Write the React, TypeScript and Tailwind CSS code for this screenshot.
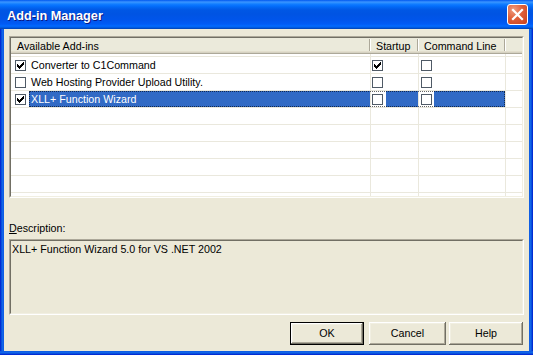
import React from "react";

function Check({ checked }: { checked: boolean }) {
  return (
    <div className="w-[11px] h-[11px] shrink-0 border border-[#4f5a66] bg-white relative">
      {checked && (
        <svg
          width="9"
          height="9"
          viewBox="0 0 9 9"
          className="absolute left-0 top-0"
          shapeRendering="crispEdges"
        >
          <path
            fill="#000"
            d="M1 3h1v3h-1zM2 4h1v3h-1zM3 5h1v3h-1zM4 4h1v3h-1zM5 3h1v3h-1zM6 2h1v3h-1zM7 1h1v3h-1z"
          />
        </svg>
      )}
    </div>
  );
}

type RowProps = {
  label?: string;
  c0?: boolean;
  c1?: boolean;
  c2?: boolean;
  selected?: boolean;
};

function Row({ label, c0, c1, c2, selected }: RowProps) {
  const empty = label === undefined;
  return (
    <div className="flex h-[17px] shrink-0 border-b border-[#EAE8DD] relative">
      <div className="w-[360px] shrink-0 flex items-center border-r border-[#EAE8DD] pl-[4px]">
        {!empty && <Check checked={!!c0} />}
        {!empty && (
          <div
            className={
              "ml-[3px] self-stretch flex-1 flex items-center pl-[2px] whitespace-nowrap " +
              (selected ? "bg-[#316AC5] text-white" : "")
            }
          >
            {label}
          </div>
        )}
      </div>
      <div className="w-[48px] shrink-0 flex border-r border-[#EAE8DD]">
        {!empty && (
          <>
            <div className="w-[15px] flex items-center pl-[1px] bg-white">
              <Check checked={!!c1} />
            </div>
            <div className={"flex-1 " + (selected ? "bg-[#316AC5]" : "")} />
          </>
        )}
      </div>
      <div className="w-[87px] shrink-0 flex border-r border-[#EAE8DD]">
        {!empty && (
          <>
            <div className="w-[15px] flex items-center pl-[2px] bg-white">
              <Check checked={!!c2} />
            </div>
            <div className={"flex-1 " + (selected ? "bg-[#316AC5]" : "")} />
          </>
        )}
      </div>
      <div className="flex-1" />
      {selected && (
        <div className="absolute left-[18px] top-0 w-[476px] h-[16px] border border-dotted border-black/60 pointer-events-none" />
      )}
    </div>
  );
}

function Spacer() {
  return (
    <div className="flex h-[3px] shrink-0 border-b border-[#EAE8DD]">
      <div className="w-[360px] shrink-0 border-r border-[#EAE8DD]" />
      <div className="w-[48px] shrink-0 border-r border-[#EAE8DD]" />
      <div className="w-[87px] shrink-0 border-r border-[#EAE8DD]" />
      <div className="flex-1" />
    </div>
  );
}

function HeaderCell({ text, className }: { text: string; className: string }) {
  return (
    <div className={"flex shrink-0 " + className}>
      <div className="flex-1 flex items-center whitespace-nowrap">{text}</div>
      <div className="w-[1px] mt-[1px] h-[12px] bg-[#ACA899]" />
      <div className="w-[1px] mt-[1px] h-[12px] bg-white" />
    </div>
  );
}

function Button({ text, def, w }: { text: string; def?: boolean; w: string }) {
  return (
    <div
      className={
        "h-[23px] flex items-center justify-center bg-[#ECE9D8] " +
        w +
        " " +
        (def
          ? "border border-black shadow-[inset_-1px_-1px_0_#716F64,inset_1px_1px_0_#ffffff,inset_-2px_-2px_0_#ACA899,inset_2px_2px_0_#F1EFE2]"
          : "shadow-[inset_-1px_-1px_0_#716F64,inset_1px_1px_0_#ffffff,inset_-2px_-2px_0_#ACA899,inset_2px_2px_0_#F1EFE2]")
      }
    >
      {text}
    </div>
  );
}

export default function App() {
  return (
    <div className="w-[533px] h-[355px] flex flex-col text-[10.7px] text-black font-['Liberation_Sans',Arial,sans-serif] overflow-hidden">
      {/* Title bar */}
      <div className="h-[29px] shrink-0 flex items-center justify-between pl-[7px] pr-[5px] bg-[linear-gradient(to_bottom,#0058EE_0px,#3A93FF_2px,#288EFF_3px,#127DFF_4px,#036FFC_6px,#0262EE_8px,#0057E5_10px,#0054E3_14px,#0055EB_20px,#005BF5_24px,#026AFE_26px,#0062EF_27px,#0052D6_28px,#0040AB_29px)]">
        <div className="pt-[4px] text-white font-bold text-[12.7px] leading-[15px] [text-shadow:1px_1px_0_#0A1883]">
          Add-in Manager
        </div>
        <div className="w-[21px] h-[21px] rounded-[3px] border border-white bg-[radial-gradient(circle_at_30%_25%,#EE9C80_0%,#E0603A_45%,#C8401C_100%)] flex items-center justify-center">
          <svg width="19" height="19" viewBox="0 0 19 19">
            <path d="M5 5L14 14M14 5L5 14" stroke="#fff" strokeWidth="2.2" strokeLinecap="square" />
          </svg>
        </div>
      </div>

      <div className="flex flex-1 min-h-0">
        <div className="w-[4px] shrink-0 bg-[linear-gradient(to_right,#0019CF,#0855DD_40%,#166AEE_70%,#0855DD)]" />
        <div className="flex-1 bg-[#ECE9D8] flex flex-col pt-[7px] px-[5px]">
          {/* List view */}
          <div className="h-[162px] shrink-0 border border-t-[#ACA899] border-l-[#ACA899] border-b-white border-r-white">
            <div className="h-full border border-t-[#716F64] border-l-[#716F64] border-b-[#F1EFE2] border-r-[#F1EFE2] bg-white flex flex-col overflow-hidden">
              <div className="flex h-[16px] shrink-0 bg-[linear-gradient(to_bottom,#EBEADB_0px,#EBEADB_13px,#E2DECD_13px,#E2DECD_14px,#D6D2C2_14px,#D6D2C2_15px,#ACA899_15px)]">
                <HeaderCell text="Available Add-ins" className="w-[360px] pl-[6px]" />
                <HeaderCell text="Startup" className="w-[48px] pl-[5px]" />
                <HeaderCell text="Command Line" className="w-[87px] pl-[5px]" />
                <div className="flex-1" />
              </div>
              <Spacer />
              <Row label="Converter to C1Command" c0 c1 />
              <Row label="Web Hosting Provider Upload Utility." />
              <Row label="XLL+ Function Wizard" c0 selected />
              <Row />
              <Row />
              <Row />
              <Row />
              <Row />
              <Row />
            </div>
          </div>

          <div className="mt-[24px] h-[13px] leading-[13px] shrink-0">
            <span className="underline underline-offset-[1px]">D</span>escription:
          </div>

          <div className="mt-[4px] h-[76px] shrink-0 border border-t-[#ACA899] border-l-[#ACA899] border-b-white border-r-white">
            <div className="h-full border border-t-[#716F64] border-l-[#716F64] border-b-[#F1EFE2] border-r-[#F1EFE2] bg-[#ECE9D8] pl-[1px] pt-[2px] leading-[13px]">
              XLL+ Function Wizard 5.0 for VS .NET 2002
            </div>
          </div>

          <div className="mt-[7px] flex justify-end pr-[1px] shrink-0">
            <Button text="OK" def w="w-[74px]" />
            <div className="w-[5px]" />
            <Button text="Cancel" w="w-[77px]" />
            <div className="w-[3px]" />
            <Button text="Help" w="w-[74px]" />
          </div>
        </div>
        <div className="w-[4px] shrink-0 bg-[linear-gradient(to_right,#0855DD,#166AEE_30%,#0855DD_60%,#0019CF)]" />
      </div>
      <div className="h-[4px] shrink-0 bg-[linear-gradient(to_bottom,#0855DD,#166AEE_30%,#0855DD_60%,#0019CF)]" />
    </div>
  );
}
